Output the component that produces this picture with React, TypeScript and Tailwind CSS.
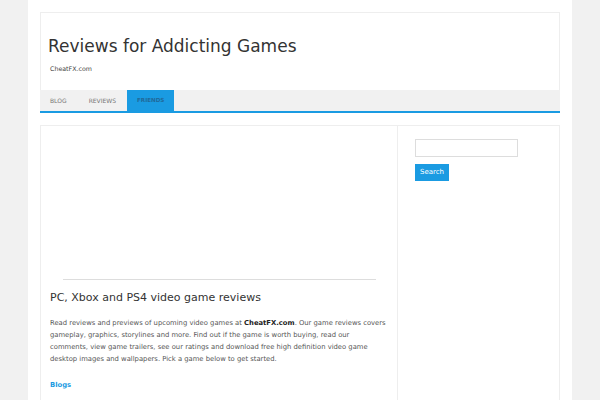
import React from 'react';

const font = { fontFamily: '"DejaVu Sans", sans-serif' };

const App = () => {
  return (
    <div className="min-h-screen bg-[#f1f1f1]" style={font}>
      <div className="mx-auto w-[544px] min-h-screen bg-white px-3 pt-3">
        {/* header */}
        <div className="border border-b-0 border-[#eeeeee] h-[78px] pl-[7px] pt-[22px]">
          <h1 className="text-[17px] leading-[22px] text-[#333333]">Reviews for Addicting Games</h1>
          <p className="mt-[7px] pl-[2px] text-[6.3px] text-[#444444]">CheatFX.com</p>
        </div>
        {/* nav */}
        <nav className="flex h-[23px] bg-[#f1f1f1] border-b-2 border-[#1a9be2] text-[6px] uppercase">
          <a className="flex items-center pl-[10px] pr-[11px] text-[#777777]">Blog</a>
          <a className="flex items-center px-[11px] text-[#777777]">Reviews</a>
          <a className="flex items-center px-[10px] bg-[#1a9be2] text-[5.6px] font-bold text-[#206a9a]">Friends</a>
        </nav>
        {/* content */}
        <div className="mt-3 flex border border-[#eeeeee] h-[300px]">
          <main className="w-[357px] border-r border-[#eeeeee] pl-[9px] pr-[9px]">
            <div className="h-[153px]" />
            <hr className="ml-[13px] mr-[12px] border-t border-[#dddddd]" />
            <h2 className="mt-[9px] text-[11px] leading-[18px] text-[#333333]">PC, Xbox and PS4 video game reviews</h2>
            <p className="mt-[10px] text-[6.8px] leading-[12px] text-[#555555]">
              Read reviews and previews of upcoming video games at <strong className="text-[#222222]">CheatFX.com</strong>. Our game reviews covers gameplay, graphics, storylines and more. Find out if the game is worth buying, read our comments, view game trailers, see our ratings and download free high definition video game desktop images and wallpapers. Pick a game below to get started.
            </p>
            <h3 className="mt-[15px] text-[6.8px] font-bold text-[#1a9be2]">Blogs</h3>
          </main>
          <aside className="flex-1 pl-[17px] pt-[13px]">
            <input className="block w-[103px] h-[18px] border border-[#dddddd]" />
            <button className="mt-[3px] h-[17px] px-[5px] bg-[#1a9be2] text-white text-[7px]">Search</button>
          </aside>
        </div>
      </div>
    </div>
  );
};

export default App;
